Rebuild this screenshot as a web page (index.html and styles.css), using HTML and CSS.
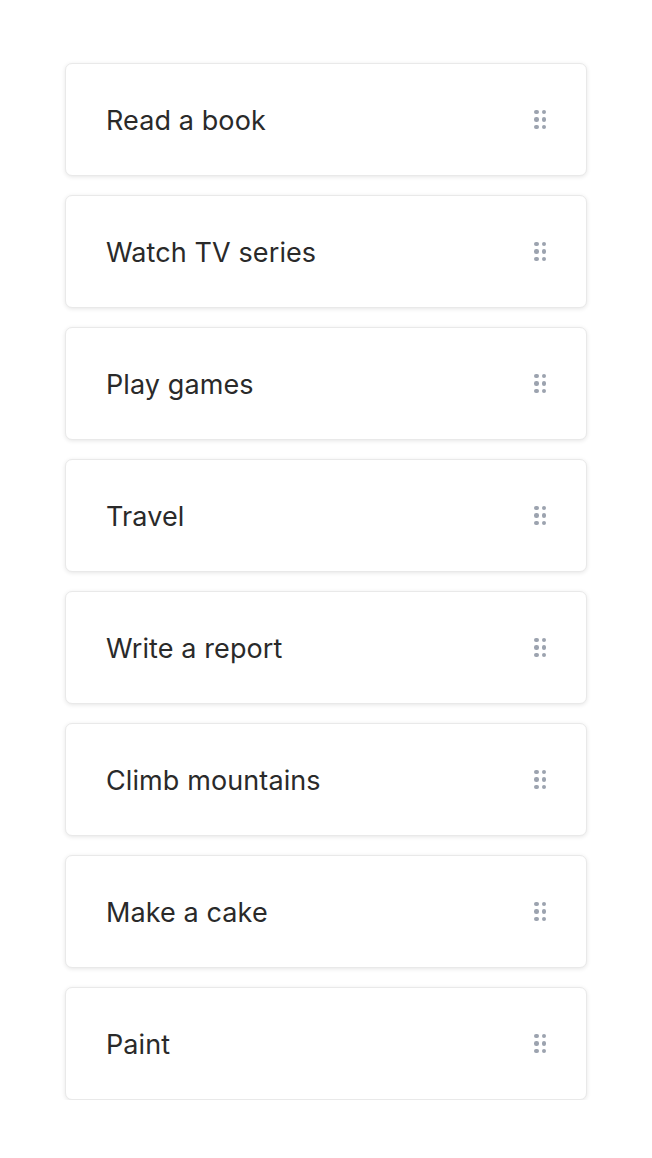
FILE: index.html
```html
<!DOCTYPE html>
<html>
<head>
<meta charset="utf-8">
<link rel="stylesheet" href="styles.css">
</head>
<body>
<ul class="list">
  <li class="card"><span class="label">Read a book</span><span class="handle"><i></i><i></i><i></i><i></i><i></i><i></i></span></li>
  <li class="card"><span class="label">Watch TV series</span><span class="handle"><i></i><i></i><i></i><i></i><i></i><i></i></span></li>
  <li class="card"><span class="label">Play games</span><span class="handle"><i></i><i></i><i></i><i></i><i></i><i></i></span></li>
  <li class="card"><span class="label">Travel</span><span class="handle"><i></i><i></i><i></i><i></i><i></i><i></i></span></li>
  <li class="card"><span class="label">Write a report</span><span class="handle"><i></i><i></i><i></i><i></i><i></i><i></i></span></li>
  <li class="card"><span class="label">Climb mountains</span><span class="handle"><i></i><i></i><i></i><i></i><i></i><i></i></span></li>
  <li class="card"><span class="label">Make a cake</span><span class="handle"><i></i><i></i><i></i><i></i><i></i><i></i></span></li>
  <li class="card"><span class="label">Paint</span><span class="handle"><i></i><i></i><i></i><i></i><i></i><i></i></span></li>
</ul>
</body>
</html>
```
FILE: styles.css
```css
html, body {
  margin: 0;
  padding: 0;
  background: #ffffff;
}
body {
  font-family: Inter, "Noto Sans", sans-serif;
  color: #2a2a2a;
}
.list {
  list-style: none;
  margin: 0 auto;
  padding: 63px 0 0;
  width: 522px;
  display: flex;
  flex-direction: column;
  gap: 19px;
}
.card {
  box-sizing: border-box;
  height: 113px;
  border: 1px solid #e9e9e9;
  border-radius: 7px;
  background: #fff;
  box-shadow: 0 1px 4px rgba(0,0,0,0.10);
  display: flex;
  align-items: center;
  justify-content: space-between;
  padding: 0 40px 0 40px;
}
.label {
  font-size: 27px;
  letter-spacing: 0.1px;
  padding-top: 2px;
}
.handle {
  display: grid;
  grid-template-columns: repeat(2, 4.5px);
  grid-auto-rows: 4.5px;
  column-gap: 3px;
  row-gap: 3px;
}
.handle i {
  display: block;
  width: 4.5px;
  height: 4.5px;
  border-radius: 50%;
  background: #9ca3af;
}
```
